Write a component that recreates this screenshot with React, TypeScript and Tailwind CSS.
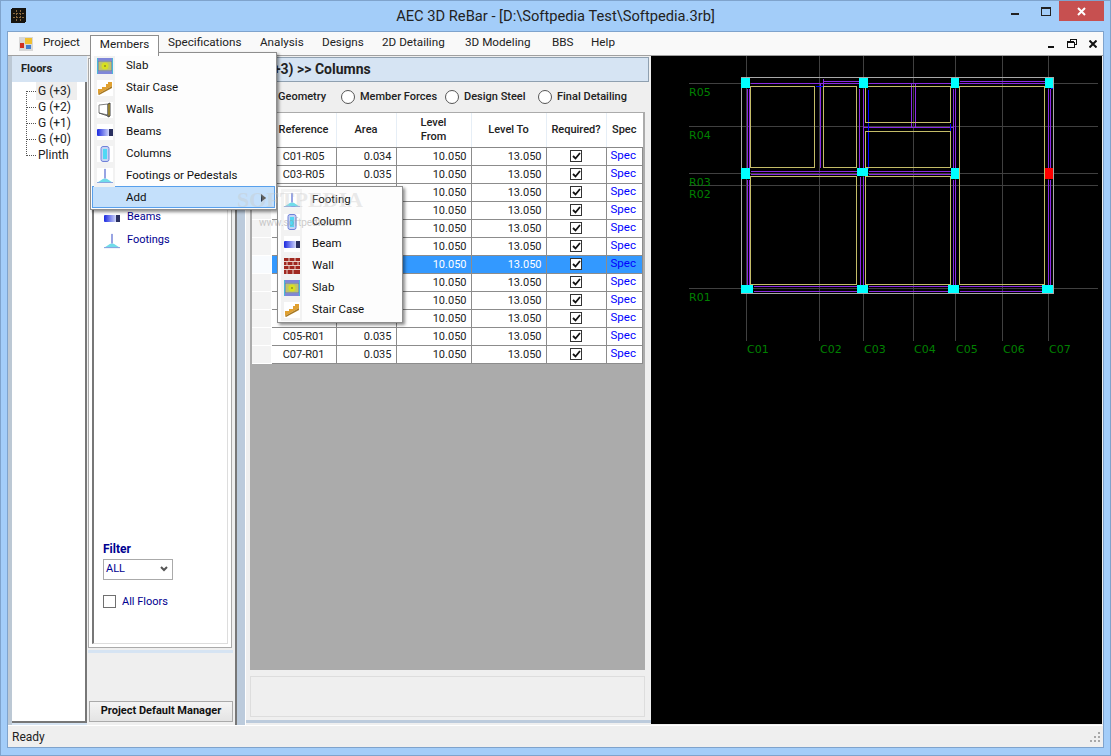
import { ReactNode } from "react";

const FONT = "[font-family:'Roboto','Liberation_Sans',sans-serif]";

function Icon({ name }: { name: string }) {
  if (name === "slab")
    return (
      <svg width="16" height="16" viewBox="0 0 16 16" className="block">
        <rect x="0" y="0" width="16" height="16" fill="#a9a9c4" />
        <rect x="1" y="3" width="14" height="10" fill="#bfc46a" stroke="#5d6fd0" />
        <rect x="0" y="0" width="16" height="2" fill="#7f86d8" />
        <rect x="0" y="14" width="16" height="2" fill="#7f86d8" />
        <rect x="0" y="0" width="1" height="16" fill="#48b8d8" />
        <rect x="15" y="0" width="1" height="16" fill="#48b8d8" />
        <circle cx="8" cy="8" r="3.5" fill="#d8e020" />
        <circle cx="8" cy="8" r="1" fill="#909020" />
      </svg>
    );
  if (name === "stair")
    return (
      <svg width="16" height="16" viewBox="0 0 16 16" className="block">
        <path d="M1 9h4V7h4V4h2V2h4v4L1 14z" fill="#e0a030" />
        <path d="M1 14L15 6v2L2 15z" fill="#a87820" />
      </svg>
    );
  if (name === "walls")
    return (
      <svg width="16" height="16" viewBox="0 0 16 16" className="block">
        <path d="M2 3l9-1v11l-9-2z" fill="#fff" stroke="#808080" />
        <path d="M11 2l2-1v13l-2 1z" fill="#e8c020" stroke="#404040" />
        <path d="M2 11l9 3 2 0" fill="none" stroke="#606060" />
      </svg>
    );
  if (name === "beam")
    return (
      <svg width="16" height="16" viewBox="0 0 16 16" className="block">
        <defs>
          <linearGradient id="beamfill" x1="0" x2="1" y1="0" y2="0">
            <stop offset="0" stopColor="#1a28e0" />
            <stop offset="1" stopColor="#d0d6fa" />
          </linearGradient>
        </defs>
        <rect x="0" y="5" width="12" height="7" rx="1" fill="url(#beamfill)" />
        <rect x="12" y="5" width="4" height="7" fill="#2a3060" />
      </svg>
    );
  if (name === "column")
    return (
      <svg width="16" height="16" viewBox="0 0 16 16" className="block">
        <rect x="4" y="0.5" width="8" height="15" rx="2" fill="#c4d4f4" stroke="#7080d8" />
        <rect x="6" y="3" width="4" height="10" fill="#50d8f4" />
      </svg>
    );
  if (name === "footing")
    return (
      <svg width="16" height="16" viewBox="0 0 18 18" className="block">
        <rect x="8" y="1" width="2" height="11" fill="#8c9ae0" />
        <path d="M7 12h4l6 4H1z" fill="#70dcea" />
        <rect x="0" y="16" width="18" height="1" fill="#7090d8" />
      </svg>
    );
  return (
    <svg width="16" height="16" viewBox="0 0 16 16" className="block">
      <rect width="16" height="16" fill="#a02820" />
      <path d="M0 3.5h16M0 7.5h16M0 11.5h16M5 0v3M11 0v3M3 4v3M9 4v3M14 4v3M5 8v3M11 8v3M3 12v4M9 12v4" stroke="#e8d0c8" strokeWidth="1" />
    </svg>
  );
}

function MenuRow({ icon, label, gap = "mr-[11px]" }: { icon: string; label: string; gap?: string }) {
  return (
    <div className="flex h-[22px] items-center">
      <div className={`ml-[3px] flex h-[22px] w-[21px] items-center justify-center bg-[#f2f2f2] ${gap}`}>
        <span className="bg-white">
          <Icon name={icon} />
        </span>
      </div>
      <span className="text-[11.5px] text-[#111]">{label}</span>
    </div>
  );
}

const menuItems = [
  { label: "Specifications", w: "w-[92px]" },
  { label: "Analysis", w: "w-[62px]" },
  { label: "Designs", w: "w-[60px]" },
  { label: "2D Detailing", w: "w-[83px]" },
  { label: "3D Modeling", w: "w-[87px]" },
  { label: "BBS", w: "w-[39px]" },
  { label: "Help", w: "w-[44px]" },
];

const tree = ["G (+3)", "G (+2)", "G (+1)", "G (+0)", "Plinth"];

// rows 3 to 9 sit fully behind the Add submenu, so their first two cells stay empty
const rows = [
  ["C01-R05", "0.034"],
  ["C03-R05", "0.035"],
  ["", ""],
  ["", ""],
  ["", ""],
  ["", ""],
  ["", ""],
  ["", ""],
  ["", ""],
  ["C03-R01", "0.035"],
  ["C05-R01", "0.035"],
  ["C07-R01", "0.035"],
];

function Radio({ label, className }: { label: string; className: string }) {
  return (
    <div className={`flex items-center ${className}`}>
      <span className="mr-[5px] h-[14px] w-[14px] rounded-full border border-[#555] bg-white" />
      <span className="text-[11px] font-medium text-[#222]">{label}</span>
    </div>
  );
}

function Th({ children, className }: { children: ReactNode; className: string }) {
  return (
    <th className={`border-r border-b border-r-[#e6eef6] border-b-[#888] bg-white p-0 text-center align-middle text-[11px] leading-[14px] font-medium text-[#222] ${className}`}>
      {children}
    </th>
  );
}

const GRID_H = [83, 126, 173, 185, 288];
const GRID_V = [746, 819, 863, 913, 955, 1002, 1048];
const RLABELS: [string, number][] = [["R05", 96], ["R04", 139], ["R03", 186], ["R02", 198], ["R01", 301]];
const CLABELS: [string, number][] = [["C01", 747], ["C02", 820], ["C03", 864], ["C04", 914], ["C05", 956], ["C06", 1003], ["C07", 1049]];

// x1,y1,x2,y2 in screen pixels
const PURPLE = [
  [750, 83, 823, 83], [823, 81, 859, 81], [823, 83, 859, 83], [868, 83, 950, 83],
  [959, 81, 1045, 81], [959, 83, 1045, 83],
  [750, 171, 857, 171], [750, 174, 857, 174], [868, 171, 951, 171], [868, 174, 951, 174],
  [753, 286, 857, 286], [753, 291, 857, 291], [868, 286, 948, 286], [868, 291, 948, 291],
  [959, 286, 1042, 286], [959, 291, 1042, 291],
  [747, 88, 747, 168], [749, 88, 749, 168], [747, 179, 747, 285], [749, 179, 749, 285],
  [820, 83, 820, 167], [823, 78, 823, 167],
  [859, 88, 859, 168], [863, 88, 863, 168], [860, 176, 860, 285], [863, 176, 863, 285],
  [911, 83, 911, 127], [915, 83, 915, 127], [863, 127, 953, 127],
  [953, 88, 953, 168], [955, 88, 955, 168], [953, 179, 953, 285], [955, 179, 955, 285],
  [1048, 88, 1048, 168], [1050, 88, 1050, 168], [1048, 179, 1048, 285], [1050, 179, 1050, 285],
];
const BLUE = [
  [815, 86, 823, 86], [859, 86, 868, 86], [868, 89, 868, 168], [950, 123, 950, 131],
  [750, 85, 750, 88], [1050, 88, 1052, 88],
];
const YELLOW = [
  [750, 86, 64, 81], [823, 86, 33, 81], [865, 86, 85, 36], [865, 131, 85, 36],
  [750, 176, 106, 108], [865, 176, 85, 108], [959, 86, 85, 198],
];
const COLS = [
  [741, 78, 9, 10], [859, 78, 9, 10], [951, 78, 8, 10], [1045, 78, 8, 10],
  [741, 168, 9, 11], [857, 168, 11, 8], [951, 168, 8, 11],
  [741, 285, 12, 8], [857, 285, 11, 8], [948, 285, 11, 8], [1042, 285, 11, 8],
];

function Cad() {
  return (
    <svg width="451" height="668" viewBox="651 56 451 668" className="block" shapeRendering="crispEdges">
      <rect x="651" y="56" width="451" height="668" fill="#000" />
      {GRID_H.map((y) => (
        <line key={y} x1="689" x2="1098" y1={y + 0.5} y2={y + 0.5} stroke="#404040" />
      ))}
      {GRID_V.map((x) => (
        <line key={x} x1={x + 0.5} x2={x + 0.5} y1="56" y2="341" stroke="#404040" />
      ))}
      <rect x="741.5" y="77.5" width="312" height="216" fill="none" stroke="#a8a8a8" />
      {PURPLE.map((l, i) => (
        <line key={i} x1={l[0] + 0.5} y1={l[1] + 0.5} x2={l[2] + 0.5} y2={l[3] + 0.5} stroke="#8a2be2" />
      ))}
      {BLUE.map((l, i) => (
        <line key={i} x1={l[0] + 0.5} y1={l[1] + 0.5} x2={l[2] + 0.5} y2={l[3] + 0.5} stroke="#0000ff" />
      ))}
      {YELLOW.map((r, i) => (
        <rect key={i} x={r[0] + 0.5} y={r[1] + 0.5} width={r[2]} height={r[3]} fill="none" stroke="#c4bc68" />
      ))}
      {COLS.map((r, i) => (
        <rect key={i} x={r[0]} y={r[1]} width={r[2]} height={r[3]} fill="#00ffff" />
      ))}
      <rect x="1045" y="168" width="8" height="11" fill="#ff0000" />
      {RLABELS.map(([t, y]) => (
        <text key={t} x="689" y={y} fill="#008000" fontSize="11" fontFamily="'DejaVu Sans',sans-serif" shapeRendering="auto">{t}</text>
      ))}
      {CLABELS.map(([t, x]) => (
        <text key={t} x={x} y="353" fill="#008000" fontSize="11" fontFamily="'DejaVu Sans',sans-serif" shapeRendering="auto">{t}</text>
      ))}
    </svg>
  );
}

export default function App() {
  return (
    <div className={`relative flex h-[756px] w-[1111px] flex-col overflow-hidden border border-[#7fa3cc] bg-[#a3cdf9] ${FONT}`}>
      {/* title bar */}
      <div className="grid h-[30px] shrink-0 grid-cols-[1fr_auto_1fr]">
        <div className="pt-[7px] pl-[10px]">
          <svg width="15" height="15" viewBox="0 0 15 15" shapeRendering="crispEdges">
            <rect width="15" height="15" rx="2" fill="#161410" />
            <path d="M5 2v11M9 2v11M2 5h11M2 9h11" stroke="#8a6a40" strokeDasharray="2 1" />
          </svg>
        </div>
        <div className="pt-[5px] text-[14.7px] leading-[20px] text-[#222]">AEC 3D ReBar - [D:\Softpedia Test\Softpedia.3rb]</div>
        <div className="flex justify-end pr-[6px]">
          <span className="mt-[12px] mr-[22px] h-[2px] w-[8px] bg-[#222]" />
          <span className="mt-[6px] mr-[8px] h-[9px] w-[10px] border border-t-2 border-[#222]" />
          <div className="flex h-[20px] w-[45px] items-center justify-center bg-[#c75050]">
            <svg width="9" height="9" viewBox="0 0 9 9">
              <path d="M1 1l7 7M8 1l-7 7" stroke="#fff" strokeWidth="2" />
            </svg>
          </div>
        </div>
      </div>

      {/* client area */}
      <div className="mx-[6px] mb-[7px] flex min-h-0 flex-1 flex-col border border-[#7fa3cc] bg-[#f0f0f0]">
        {/* menu bar */}
        <div className="flex h-[24px] shrink-0 items-end border-b border-[#a0a0a0] bg-[#f9f9f9] text-[11.7px] text-[#222]">
          <div className="flex h-[23px] w-[26px] items-center justify-end">
            <svg width="16" height="14" viewBox="0 0 16 14" shapeRendering="crispEdges">
              <rect x="1" y="0" width="14" height="14" fill="#d8d8d8" />
              <rect x="7" y="1" width="7" height="6" fill="#f0c030" />
              <rect x="2" y="6" width="4" height="5" fill="#d03020" />
              <rect x="8" y="8" width="5" height="4" fill="#4080d0" />
            </svg>
          </div>
          <div className="flex h-[23px] w-[56px] items-center pb-[1px] pl-[9px]">Project</div>
          <div className="relative z-30 -mb-[1px] flex h-[21px] w-[69px] items-center justify-center border border-b-0 border-[#8e8e8e] bg-white pb-[3px]">Members</div>
          {menuItems.map((m) => (
            <div key={m.label} className={`flex h-[23px] items-center pb-[1px] pl-[9px] ${m.w}`}>{m.label}</div>
          ))}
          <div className="ml-auto flex h-[23px] items-center pr-[6px]">
            <span className="mt-[7px] mr-[13px] h-[2px] w-[6px] bg-[#111]" />
            <svg width="10" height="9" viewBox="0 0 10 9" className="mr-[12px]" shapeRendering="crispEdges">
              <path d="M3 2V0.5h6.5V5H8M0.5 3h6.5v5.5H0.5z" fill="none" stroke="#111" />
              <rect x="0" y="2" width="7" height="2" fill="#111" />
            </svg>
            <svg width="8" height="8" viewBox="0 0 8 8">
              <path d="M0.5 0.5l7 7M7.5 0.5l-7 7" stroke="#111" strokeWidth="2" />
            </svg>
          </div>
        </div>

        {/* panes */}
        <div className="flex min-h-0 flex-1 border-b border-white">
          {/* floors */}
          <div className="flex w-[79px] shrink-0 flex-col border-l-[4px] border-[#bcc8d4] bg-[#d6e4f3]">
            <div className="flex h-[26px] shrink-0 items-center pl-[9px] text-[11px] font-bold text-[#222]">Floors</div>
            <div className="relative mb-[2px] flex-1 border-r-2 border-b-2 border-[#777] bg-white pt-[1px] text-[12px] text-[#222]">
              <div className="absolute top-[9px] left-[14px] h-[65px] border-l border-dotted border-[#555]" />
              {tree.map((t, i) => (
                <div key={t} className="flex h-[16px] items-center pl-[15px]">
                  <span className="w-[9px] border-t border-dotted border-[#555]" />
                  <span className={i === 0 ? "bg-[#eeeeee] pr-[6px] pl-[2px]" : "pl-[2px]"}>{t}</span>
                </div>
              ))}
            </div>
          </div>

          {/* members list */}
          <div className="ml-[1px] flex w-[149px] shrink-0 flex-col border-r-2 border-[#777] bg-[#efefef] pt-[2px]">
            <div className="mr-[3px] flex h-[590px] shrink-0 flex-col border border-[#aaaaaa] bg-white p-[3px]">
              <div className="flex h-full flex-col border-t-2 border-r border-b border-l-2 border-t-[#888] border-r-[#ddd] border-b-[#ddd] border-l-[#777] pl-[9px]">
                <div className="mt-[142px] flex h-[23px] items-center text-[11px] text-[#000090]">
                  <span className="mr-[7px] flex w-[17px] justify-center"><Icon name="beam" /></span>Beams
                </div>
                <div className="flex h-[23px] items-center text-[11px] text-[#000090]">
                  <span className="mr-[7px] flex w-[17px] justify-center"><Icon name="footing" /></span>Footings
                </div>
                <div className="mt-auto text-[12px] leading-[16px] font-bold text-[#000090]">Filter</div>
                <div className="mt-[2px] flex h-[21px] w-[70px] items-center justify-between border border-[#aaa] bg-white pr-[4px] pl-[2px] text-[11px] text-[#000090]">
                  ALL
                  <svg width="8" height="6" viewBox="0 0 8 6">
                    <path d="M1 1l3 3 3-3" fill="none" stroke="#555" strokeWidth="2" />
                  </svg>
                </div>
                <div className="mt-[14px] mb-[33px] flex items-center text-[11px] text-[#000090]">
                  <span className="mr-[6px] h-[13px] w-[13px] border border-[#707070] bg-white" />All Floors
                </div>
              </div>
            </div>
            <div className="mt-[2px] mr-[2px] h-[3px] shrink-0 bg-[#d6e4f3]" />
            <div className="mt-auto mb-[3px] ml-[1px] flex h-[21px] w-[144px] items-center justify-center border border-[#aaa] bg-gradient-to-b from-[#f4f4f4] to-[#e4e4e4] text-[11px] font-bold text-[#111]">
              Project Default Manager
            </div>
          </div>

          {/* splitter */}
          <div className="w-[8px] shrink-0 bg-[#bccbdc]" />

          {/* grid pane */}
          <div className="flex w-[406px] shrink-0 flex-col border-l border-white bg-[#efefef]">
            <div className="mt-[1px] ml-[4px] flex h-[25px] w-[399px] shrink-0 items-center border border-[#8fa0b0] bg-[#d6e4f3] pl-[4px] text-[14px] font-bold text-[#222]">
              G (+3) &gt;&gt; Columns
            </div>
            <div className="flex h-[30px] shrink-0 items-center">
              <span className="ml-[32px] w-[63px] text-[11px] font-medium text-[#222]">Geometry</span>
              <Radio label="Member Forces" className="w-[104px]" />
              <Radio label="Design Steel" className="w-[93px]" />
              <Radio label="Final Detailing" className="" />
            </div>
            <div className="ml-[4px] h-[558px] w-[395px] shrink-0 bg-[#ababab] pt-[1px] pl-[2px]">
              <table className="table-fixed border-collapse bg-white">
                <thead>
                  <tr className="h-[34px]">
                    <Th className="w-[19px] bg-[#f3f3f3]"> </Th>
                    <Th className="w-[65px]">Reference</Th>
                    <Th className="w-[60px]">Area</Th>
                    <Th className="w-[75px]">Level<br />From</Th>
                    <Th className="w-[75px]">Level To</Th>
                    <Th className="w-[60px]">Required?</Th>
                    <Th className="w-[36px] border-r-0">Spec</Th>
                  </tr>
                </thead>
                <tbody>
                  {rows.map(([ref, area], i) => {
                    const sel = i === 6;
                    const cell = `border-r border-b border-[#8c8c8c] p-0 text-[11px] leading-[15px] ${sel ? "bg-[#3399ff] text-white" : "bg-white text-[#222]"}`;
                    return (
                      <tr key={i} className="h-[18px]">
                        <td className={`border-r border-b border-[#fff] p-0 ${sel ? "bg-[#f8fbfe]" : "bg-[#f3f3f3]"}`} />
                        <td className={`${cell} text-center`}>{ref}</td>
                        <td className={`${cell} pr-[4px] text-right`}>{area}</td>
                        <td className={`${cell} pr-[4px] text-right`}>10.050</td>
                        <td className={`${cell} pr-[4px] text-right`}>13.050</td>
                        <td className={cell}>
                          <div className="flex items-center justify-center">
                            <span className="flex h-[12px] w-[12px] items-center justify-center border border-[#333] bg-white">
                              <svg width="9" height="8" viewBox="0 0 9 8">
                                <path d="M1 4l2.5 2.5L8 1" fill="none" stroke="#111" strokeWidth="1.8" />
                              </svg>
                            </span>
                          </div>
                        </td>
                        <td className={`${cell} pb-[1px] pl-[4px] !text-[11.5px] !text-[#0000ff]`}>Spec</td>
                      </tr>
                    );
                  })}
                </tbody>
              </table>
            </div>
            <div className="mt-[6px] ml-[4px] h-[41px] w-[395px] shrink-0 border border-[#dddddd]" />
            <div className="mt-[3px] h-[3px] shrink-0 bg-[#bccbdc]" />
          </div>

          {/* plan view */}
          <div className="min-w-0 flex-1 overflow-hidden">
            <Cad />
          </div>
        </div>

        {/* status bar */}
        <div className="flex h-[21px] shrink-0 items-center justify-between bg-[#efefef] pt-[1px] pr-[2px] pl-[4px] text-[12px] text-[#222]">
          Ready
          <svg width="12" height="12" viewBox="0 0 12 12" shapeRendering="crispEdges">
            <path d="M9 1h2v2H9zM9 5h2v2H9zM5 5h2v2H5zM9 9h2v2H9zM5 9h2v2H5zM1 9h2v2H1z" fill="#a8a8a8" />
          </svg>
        </div>
      </div>

      {/* open menus */}
      <div className="absolute top-[51px] left-[89px] z-20 w-[187px] border border-[#8e8e8e] bg-[#fdfdfd] pt-[2px] pb-[1px] shadow-[2px_2px_3px_rgba(0,0,0,0.45)]">
        <MenuRow icon="slab" label="Slab" />
        <MenuRow icon="stair" label="Stair Case" />
        <MenuRow icon="walls" label="Walls" />
        <MenuRow icon="beam" label="Beams" />
        <MenuRow icon="column" label="Columns" />
        <MenuRow icon="footing" label="Footings or Pedestals" />
        <div className="mx-[1px] -mt-[1px] flex h-[22px] items-center justify-between border border-[#58a0ec] bg-[#c4e0fb] pt-[1px] pr-[8px] pl-[33px] text-[11.5px] text-[#111]">
          Add
          <svg width="5" height="8" viewBox="0 0 5 8">
            <path d="M0 0l5 4-5 4z" fill="#222" />
          </svg>
        </div>
      </div>
      <div className="absolute top-[185px] left-[276px] z-20 w-[126px] border border-[#8e8e8e] bg-[#fdfdfd] pt-[2px] pb-[1px] shadow-[2px_2px_3px_rgba(0,0,0,0.45)]">
        <MenuRow icon="footing" label="Footing" gap="mr-[10px]" />
        <MenuRow icon="column" label="Column" gap="mr-[10px]" />
        <MenuRow icon="beam" label="Beam" gap="mr-[10px]" />
        <MenuRow icon="brick" label="Wall" gap="mr-[10px]" />
        <MenuRow icon="slab" label="Slab" gap="mr-[10px]" />
        <MenuRow icon="stair" label="Stair Case" gap="mr-[10px]" />
      </div>

      {/* watermark */}
      <div className="pointer-events-none absolute top-[182px] left-[236px] z-40 text-[22px] font-bold text-[#c8c8c8]/40 [font-family:'Liberation_Serif',serif]">SOFTPEDIA</div>
      <div className="pointer-events-none absolute top-[214px] left-[258px] z-40 text-[10px] text-[#999]/50">www.softpedia.com</div>
    </div>
  );
}
